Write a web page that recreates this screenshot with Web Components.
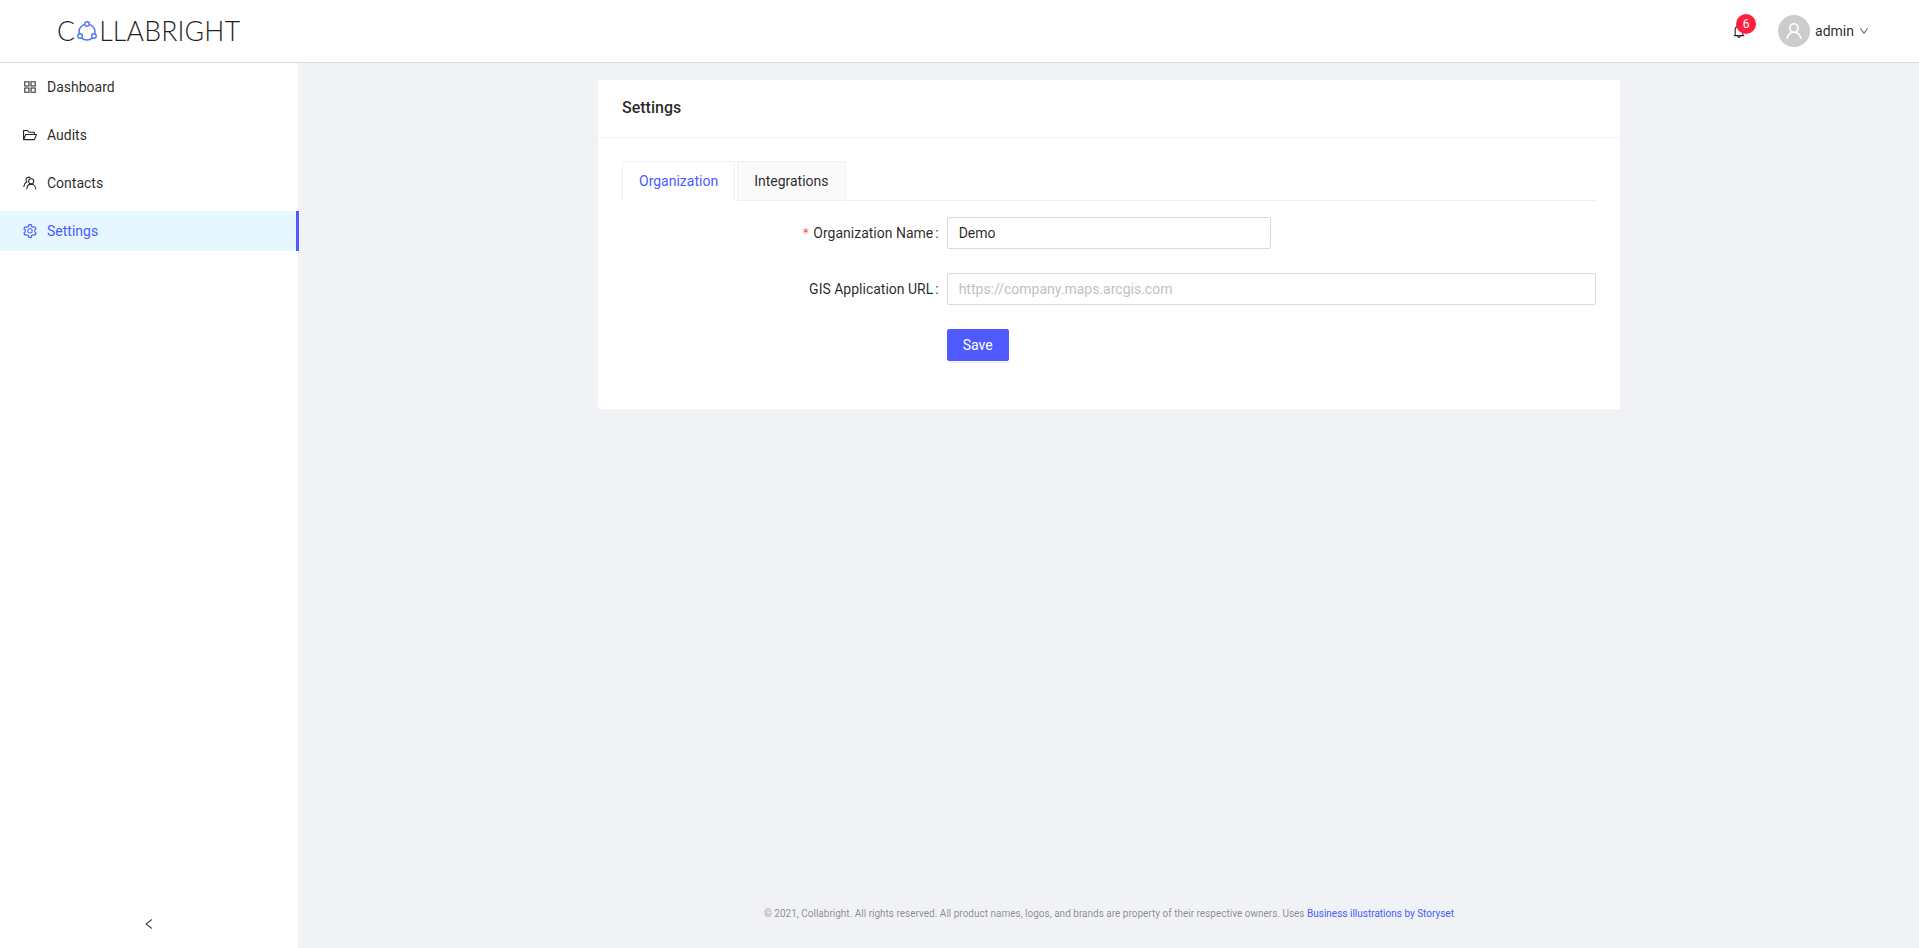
<!DOCTYPE html>
<html lang="en">
<head>
<meta charset="utf-8">
<title>Collabright Settings</title>
<style>
html,body{margin:0;height:100%;overflow:hidden}
body{font:14px/22px Roboto,"Liberation Sans",sans-serif;color:rgba(0,0,0,.85);background:#f0f2f5}
</style>
</head>
<body>
<app-shell>
  <app-header slot="header"></app-header>
  <side-nav slot="nav">
    <nav-item icon="appstore">Dashboard</nav-item>
    <nav-item icon="folder">Audits</nav-item>
    <nav-item icon="contacts">Contacts</nav-item>
    <nav-item icon="setting" active>Settings</nav-item>
  </side-nav>
  <settings-card heading="Settings">
    <tab-bar></tab-bar>
    <form-row label="Organization Name" required><text-field value="Demo" half></text-field></form-row>
    <form-row label="GIS Application URL"><text-field placeholder="https://company.maps.arcgis.com"></text-field></form-row>
    <form-row><primary-button>Save</primary-button></form-row>
  </settings-card>
  <app-footer slot="footer"></app-footer>
</app-shell>
<script>
const ICONS={
appstore:'M464 144H160c-8.8 0-16 7.2-16 16v304c0 8.8 7.2 16 16 16h304c8.8 0 16-7.2 16-16V160c0-8.8-7.2-16-16-16zm-52 268H212V212h200v200zm452-268H560c-8.8 0-16 7.2-16 16v304c0 8.8 7.2 16 16 16h304c8.8 0 16-7.2 16-16V160c0-8.8-7.2-16-16-16zm-52 268H612V212h200v200zM464 544H160c-8.8 0-16 7.2-16 16v304c0 8.8 7.2 16 16 16h304c8.8 0 16-7.2 16-16V560c0-8.8-7.2-16-16-16zm-52 268H212V612h200v200zm452-268H560c-8.8 0-16 7.2-16 16v304c0 8.8 7.2 16 16 16h304c8.8 0 16-7.2 16-16V560c0-8.8-7.2-16-16-16zm-52 268H612V612h200v200z',
folder:'M928 444H820V330.4c0-17.7-14.3-32-32-32H473L355.7 186.2a8.15 8.15 0 0 0-5.5-2.2H96c-17.7 0-32 14.3-32 32v592c0 17.7 14.3 32 32 32h698c13 0 24.8-7.9 29.7-20l134-332c1.5-3.8 2.3-7.9 2.3-12 0-17.7-14.3-32-32-32zM136 256h188.5l119.6 114.4H748V444H238c-13 0-24.8 7.9-29.7 20L136 643.2V256zm635.3 512H159l103.3-256h612.4L771.3 768z',
setting:'M924.8 625.7l-65.5-56c3.1-19 4.7-38.4 4.7-57.8s-1.6-38.8-4.7-57.8l65.5-56a32.03 32.03 0 0 0 9.3-35.2l-.9-2.6a443.74 443.74 0 0 0-79.7-137.9l-1.8-2.1a32.12 32.12 0 0 0-35.1-9.5l-81.3 28.9c-30-24.6-63.5-44-99.7-57.6l-15.7-85a32.05 32.05 0 0 0-25.8-25.7l-2.7-.5c-52.1-9.4-106.9-9.4-159 0l-2.7.5a32.05 32.05 0 0 0-25.8 25.7l-15.8 85.4a351.86 351.86 0 0 0-99 57.4l-81.9-29.1a32 32 0 0 0-35.1 9.5l-1.8 2.1a446.02 446.02 0 0 0-79.7 137.9l-.9 2.6c-4.5 12.5-.8 26.5 9.3 35.2l66.3 56.6c-3.1 18.8-4.6 38-4.6 57.1 0 19.2 1.5 38.4 4.6 57.1L99 625.5a32.03 32.03 0 0 0-9.3 35.2l.9 2.6c18.1 50.4 44.9 96.9 79.7 137.9l1.8 2.1a32.12 32.12 0 0 0 35.1 9.5l81.9-29.1c29.8 24.5 63.1 43.9 99 57.4l15.8 85.4a32.05 32.05 0 0 0 25.8 25.7l2.7.5a449.4 449.4 0 0 0 159 0l2.7-.5a32.05 32.05 0 0 0 25.8-25.7l15.7-85a350 350 0 0 0 99.7-57.6l81.3 28.9a32 32 0 0 0 35.1-9.5l1.8-2.1c34.8-41.1 61.6-87.5 79.7-137.9l.9-2.6c4.5-12.3.8-26.3-9.3-35zM788.3 465.9c2.5 15.1 3.8 30.6 3.8 46.1s-1.3 31-3.8 46.1l-6.6 40.1 74.7 63.9a370.03 370.03 0 0 1-42.6 73.6L721 702.8l-31.4 25.8c-23.9 19.6-50.5 35-79.3 45.8l-38.1 14.3-17.9 97a377.5 377.5 0 0 1-85 0l-17.9-97.2-37.8-14.5c-28.5-10.8-55-26.2-78.7-45.7l-31.4-25.9-93.4 33.2c-17-22.9-31.2-47.6-42.6-73.6l75.5-64.5-6.5-40c-2.4-14.9-3.7-30.3-3.7-45.5 0-15.3 1.2-30.6 3.7-45.5l6.5-40-75.5-64.5c11.3-26.1 25.6-50.7 42.6-73.6l93.4 33.2 31.4-25.9c23.7-19.5 50.2-34.9 78.7-45.7l37.9-14.3 17.9-97.2c28.1-3.2 56.8-3.2 85 0l17.9 97 38.1 14.3c28.7 10.8 55.4 26.2 79.3 45.8l31.4 25.8 92.8-32.9c17 22.9 31.2 47.6 42.6 73.6L781.8 426l6.5 39.9zM512 326c-97.2 0-176 78.8-176 176s78.8 176 176 176 176-78.8 176-176-78.8-176-176-176zm79.2 255.2A111.6 111.6 0 0 1 512 614c-29.9 0-58-11.7-79.2-32.8A111.6 111.6 0 0 1 400 502c0-29.9 11.7-58 32.8-79.2C454 401.6 482.1 390 512 390c29.9 0 58 11.6 79.2 32.8A111.6 111.6 0 0 1 624 502c0 29.9-11.7 58-32.8 79.2z',
bell:'M816 768h-24V428c0-141.1-104.3-257.7-240-277.1V112c0-22.1-17.9-40-40-40s-40 17.9-40 40v38.9c-135.7 19.4-240 136-240 277.1v340h-24c-17.7 0-32 14.3-32 32v32c0 4.4 3.6 8 8 8h216c0 61.8 50.2 112 112 112s112-50.2 112-112h216c4.4 0 8-3.6 8-8v-32c0-17.7-14.3-32-32-32zM512 888c-26.5 0-48-21.5-48-48h96c0 26.5-21.5 48-48 48zM304 768V428c0-55.6 21.6-107.8 60.9-147.1S456.4 220 512 220c55.6 0 107.8 21.6 147.1 60.9S720 372.4 720 428v340H304z',
user:'M858.5 763.6a374 374 0 0 0-80.6-119.5 375.63 375.63 0 0 0-119.5-80.6c-.4-.2-.8-.3-1.2-.5C719.5 518 760 444.7 760 362c0-137-111-248-248-248S264 225 264 362c0 82.7 40.5 156 102.8 201.1-.4.2-.8.3-1.2.5-44.8 18.9-85 46-119.5 80.6a375.63 375.63 0 0 0-80.6 119.5A371.7 371.7 0 0 0 136 901.8a8 8 0 0 0 8 8.2h60c4.4 0 7.9-3.5 8-7.8 2-77.2 33-149.5 87.8-204.3 56.7-56.7 132-87.9 212.2-87.9s155.5 31.2 212.2 87.9C779 752.7 810 825 812 902.2c.1 4.4 3.6 7.8 8 7.8h60a8 8 0 0 0 8-8.2c-1-47.8-10.9-94.3-29.5-138.2zM512 534c-45.9 0-89.1-17.9-121.6-50.4S340 407.9 340 362c0-45.9 17.9-89.1 50.4-121.6S466.1 190 512 190s89.1 17.9 121.6 50.4S684 316.1 684 362c0 45.9-17.9 89.1-50.4 121.6S557.9 534 512 534z',
down:'M884 256h-75c-5.1 0-9.9 2.5-12.9 6.6L512 654.2 227.9 262.6c-3-4.1-7.8-6.6-12.9-6.6h-75c-6.5 0-10.3 7.4-6.5 12.7l352.6 486.1c12.8 17.6 39 17.6 51.7 0l352.6-486.1c3.9-5.3.1-12.7-6.4-12.7z',
left:'M724 218.3V141c0-6.7-7.7-10.4-12.9-6.3L260.3 486.8a31.86 31.86 0 0 0 0 50.3l450.8 352.1c5.3 4.1 12.9.4 12.9-6.3v-77.3c0-4.9-2.3-9.6-6.1-12.6l-360-281 360-281.1c3.8-3 6.1-7.7 6.1-12.6z'
};
function iconSvg(name,size){
  if(name==='contacts'){
    return `<svg width="${size}" height="${size}" viewBox="0 0 14 14" fill="none" stroke="currentColor" stroke-width="1.05" stroke-linecap="round" style="display:block"><circle cx="8.2" cy="5.3" r="2.6"/><path d="M3.8 13c.2-2.8 2-4.9 4.4-4.9s4.4 2.1 4.6 4.9"/><path d="M7.2 1.7A2.6 2.6 0 0 0 3 3.7c0 .9.3 1.5.9 2.1C2.2 6.6 1.1 8.4.8 10.6"/></svg>`;
  }
  return `<svg width="${size}" height="${size}" viewBox="64 64 896 896" fill="currentColor" style="display:block"><path d="${ICONS[name]}"/></svg>`;
}
function define(tag,render){
  customElements.define(tag,class extends HTMLElement{
    connectedCallback(){
      if(!this.shadowRoot){this.attachShadow({mode:'open'}).innerHTML=render(this);}
    }
  });
}
define('app-shell',()=>`<style>
:host{display:grid;grid-template-columns:298px 1fr;grid-template-rows:62px 1fr;height:948px;background:#f0f2f5}
.head{grid-column:1/3;display:block;position:relative;z-index:1}
.nav{display:flex;min-height:0}
main{display:flex;flex-direction:column;min-width:0;min-height:0;padding-top:18px;padding-left:1px}
.content{flex:1;display:flex;justify-content:center;align-items:flex-start}
</style>
<div class="head"><slot name="header"></slot></div>
<div class="nav"><slot name="nav"></slot></div>
<main><div class="content"><slot></slot></div><slot name="footer"></slot></main>`);
define('app-header',()=>`<style>
:host{display:flex;align-items:center;height:62px;background:#fff;box-shadow:0 1px 0 #d9d9d9;padding:0 50px 0 57px;box-sizing:border-box}
.logo{display:flex;align-items:center;font:300 26.6px/30px Lato,sans-serif;color:#1f1f1f;letter-spacing:.2px}
.logo svg{display:block;margin:1px 1px 0 1px}
.spacer{flex:1}
.bell{position:relative;color:rgba(0,0,0,.85);margin-right:32px;width:14px;height:14px}
.badge{position:absolute;left:4px;top:-10px;width:20px;height:20px;border-radius:50%;background:#ff1f40;color:#fff;font-size:12px;line-height:20px;text-align:center}
.avatar{width:32px;height:32px;border-radius:50%;background:#ccc;color:#fff;display:flex;align-items:center;justify-content:center}
.name{margin-left:5px;margin-right:5px}
.chev{color:rgba(0,0,0,.65)}
</style>
<div class="logo" aria-label="Collabright">C<svg width="22" height="22" viewBox="0 0 22 22" fill="none" stroke="#4f74f0" stroke-width="1.4"><circle cx="11" cy="11" r="8"/><circle cx="11" cy="3" r="2.3" fill="#fff"/><circle cx="4.07" cy="15" r="2.3" fill="#fff"/><circle cx="17.93" cy="15" r="2.3" fill="#fff"/></svg>LLABRIGHT</div>
<div class="spacer"></div>
<div class="bell">${iconSvg('bell',14)}<span class="badge">6</span></div>
<div class="avatar">${iconSvg('user',18)}</div>
<span class="name">admin</span>
<span class="chev">${iconSvg('down',10)}</span>`);
define('side-nav',()=>`<style>
:host{display:flex;flex-direction:column;width:298px;background:#fff;box-sizing:border-box;padding-top:5px}
.items{flex:1;display:flex;flex-direction:column;gap:8px}
.trigger{height:48px;display:flex;align-items:center;justify-content:center;color:rgba(0,0,0,.85)}
</style>
<div class="items"><slot></slot></div>
<div class="trigger">${iconSvg('left',12)}</div>`);
define('nav-item',el=>{
  const a=el.hasAttribute('active');
  return `<style>
:host{display:flex;align-items:center;height:40px;padding-left:23px;position:relative;${a?'background:#e6f7ff;color:#475bff;':''}}
.i{width:14px;height:14px;margin-right:10px;flex:none}
.bar{position:absolute;right:-1px;top:0;bottom:0;width:3px;background:#4f5bff}
</style><span class="i">${iconSvg(el.getAttribute('icon'),14)}</span><slot></slot>${a?'<span class="bar"></span>':''}`;
});
define('settings-card',el=>`<style>
:host{display:block;width:1022px;background:#fff;flex:none}
.h{font-size:16px;font-weight:500;line-height:24px;padding:16px 24px 17px;border-bottom:1px solid #f0f0f0}
.b{padding:23px 24px 24px}
</style><div class="h">${el.getAttribute('heading')}</div><div class="b"><slot></slot></div>`);
define('tab-bar',()=>`<style>
:host{display:flex;gap:2px;border-bottom:1px solid #f0f0f0;margin-bottom:16px;height:39px}
.t{box-sizing:border-box;height:40px;padding:8px 16px;border:1px solid #f0f0f0;border-radius:2px 2px 0 0;background:#fafafa}
.a{background:#fff;color:#475bff;border-bottom-color:#fff}
</style><div class="t a">Organization</div><div class="t">Integrations</div>`);
define('form-row',el=>{
  const l=el.getAttribute('label');
  return `<style>
:host{display:grid;grid-template-columns:33.3333% 1fr;margin-bottom:24px}
label{display:flex;justify-content:flex-end;align-items:center;height:32px}
.s{color:#ff4d4f;margin-right:4px;width:7px;text-align:center;font:12px/1 "DejaVu Sans",sans-serif}
.c{margin:0 8px 0 2px}
.f{grid-column:2}
</style>${l?`<label>${el.hasAttribute('required')?'<span class="s">*</span>':''}${l}<span class="c">:</span></label>`:''}<div class="f"><slot></slot></div>`;
});
define('text-field',el=>{
  const v=el.getAttribute('value')||'',p=el.getAttribute('placeholder')||'';
  return `<style>
:host{display:block;${el.hasAttribute('half')?'width:50%;':''}}
input{display:block;width:100%;box-sizing:border-box;height:32px;padding:4px 11px;border:1px solid #d9d9d9;border-radius:2px;font:14px/22px Roboto,sans-serif;color:rgba(0,0,0,.85);background:#fff;outline:0}
input::placeholder{color:#bfbfbf;opacity:1}
</style><input value="${v}" placeholder="${p}">`;
});
define('primary-button',()=>`<style>
:host{display:inline-block}
button{display:block;height:32px;padding:0 15px;border:1px solid #4f5bff;background:#4f5bff;color:#fff;border-radius:2px;font:14px/22px Roboto,sans-serif;box-shadow:0 2px 0 rgba(0,0,0,.045)}
</style><button type="button"><slot></slot></button>`);
define('app-footer',()=>`<style>
:host{display:block;text-align:center;padding:25px 50px 23px;font-size:10px;line-height:22px;color:rgba(0,0,0,.45)}
a{color:#475bff;text-decoration:none}
</style>© 2021, Collabright. All rights reserved. All product names, logos, and brands are property of their respective owners. Uses <a href="#">Business illustrations by Storyset</a>`);
</script>
</body>
</html>
